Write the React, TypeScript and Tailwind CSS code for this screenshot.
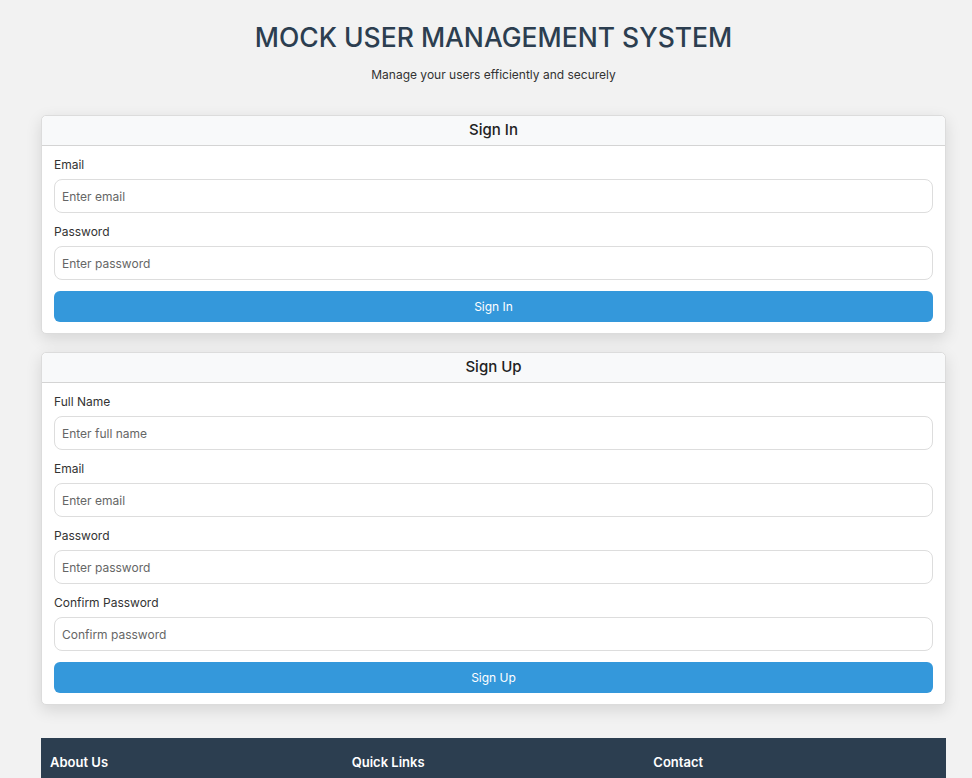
const Field = ({ label, placeholder, type = "text" }: { label: string; placeholder: string; type?: string }) => (
    <div>
        <label className="block text-[12px] leading-[18px] text-[#333] mb-[5px]">{label}</label>
        <input
            type={type}
            placeholder={placeholder}
            className="block h-[34px] w-full rounded-[8px] border border-[#ddd] bg-white px-[7px] text-[12px] text-[#333] placeholder:text-[#666] outline-none"
        />
    </div>
)

const Card = ({ title, children, button }: { title: string; children: React.ReactNode; button: string }) => (
    <section className="rounded-[5px] border border-[#dcdcdc] bg-white shadow-[0_5px_16px_rgba(0,0,0,0.12)]">
        <header className="h-[30px] flex items-center justify-center bg-[#f8f9fa] border-b border-[#d4d4d4] rounded-t-[5px]">
            <h2 className="text-[15px] font-medium text-[#222]">{title}</h2>
        </header>
        <div className="px-[12px] pt-[10px] pb-[11px] flex flex-col gap-[10px]">
            {children}
            <button className="mt-[1px] h-[31px] w-full rounded-[6px] bg-[#3498db] text-white text-[12px]">
                {button}
            </button>
        </div>
    </section>
)

export default function App() {
    return (
        <div className="min-h-[778px] bg-[#f2f2f2] pl-[41px] pr-[26px] font-['Inter',sans-serif]">
            <div className="text-center pt-[19px]">
                <h1 className="text-[26.5px] leading-[36px] font-medium text-[#2c3e50]">
                    MOCK USER MANAGEMENT SYSTEM
                </h1>
                <p className="mt-[11px] text-[12px] text-[#333]">Manage your users efficiently and securely</p>
            </div>

            <div className="mt-[31px] flex flex-col gap-[18px]">
                <Card title="Sign In" button="Sign In">
                    <Field label="Email" placeholder="Enter email" type="email" />
                    <Field label="Password" placeholder="Enter password" type="password" />
                </Card>
                <Card title="Sign Up" button="Sign Up">
                    <Field label="Full Name" placeholder="Enter full name" />
                    <Field label="Email" placeholder="Enter email" type="email" />
                    <Field label="Password" placeholder="Enter password" type="password" />
                    <Field label="Confirm Password" placeholder="Confirm password" type="password" />
                </Card>
            </div>

            <footer className="mt-[33px] bg-[#2c3e50] text-white grid grid-cols-3 pt-[15px] pb-[20px]">
                <h3 className="px-[9px] text-[13px] font-semibold">About Us</h3>
                <h3 className="px-[9px] text-[13px] font-semibold">Quick Links</h3>
                <h3 className="px-[9px] text-[13px] font-semibold">Contact</h3>
            </footer>
        </div>
    )
}
